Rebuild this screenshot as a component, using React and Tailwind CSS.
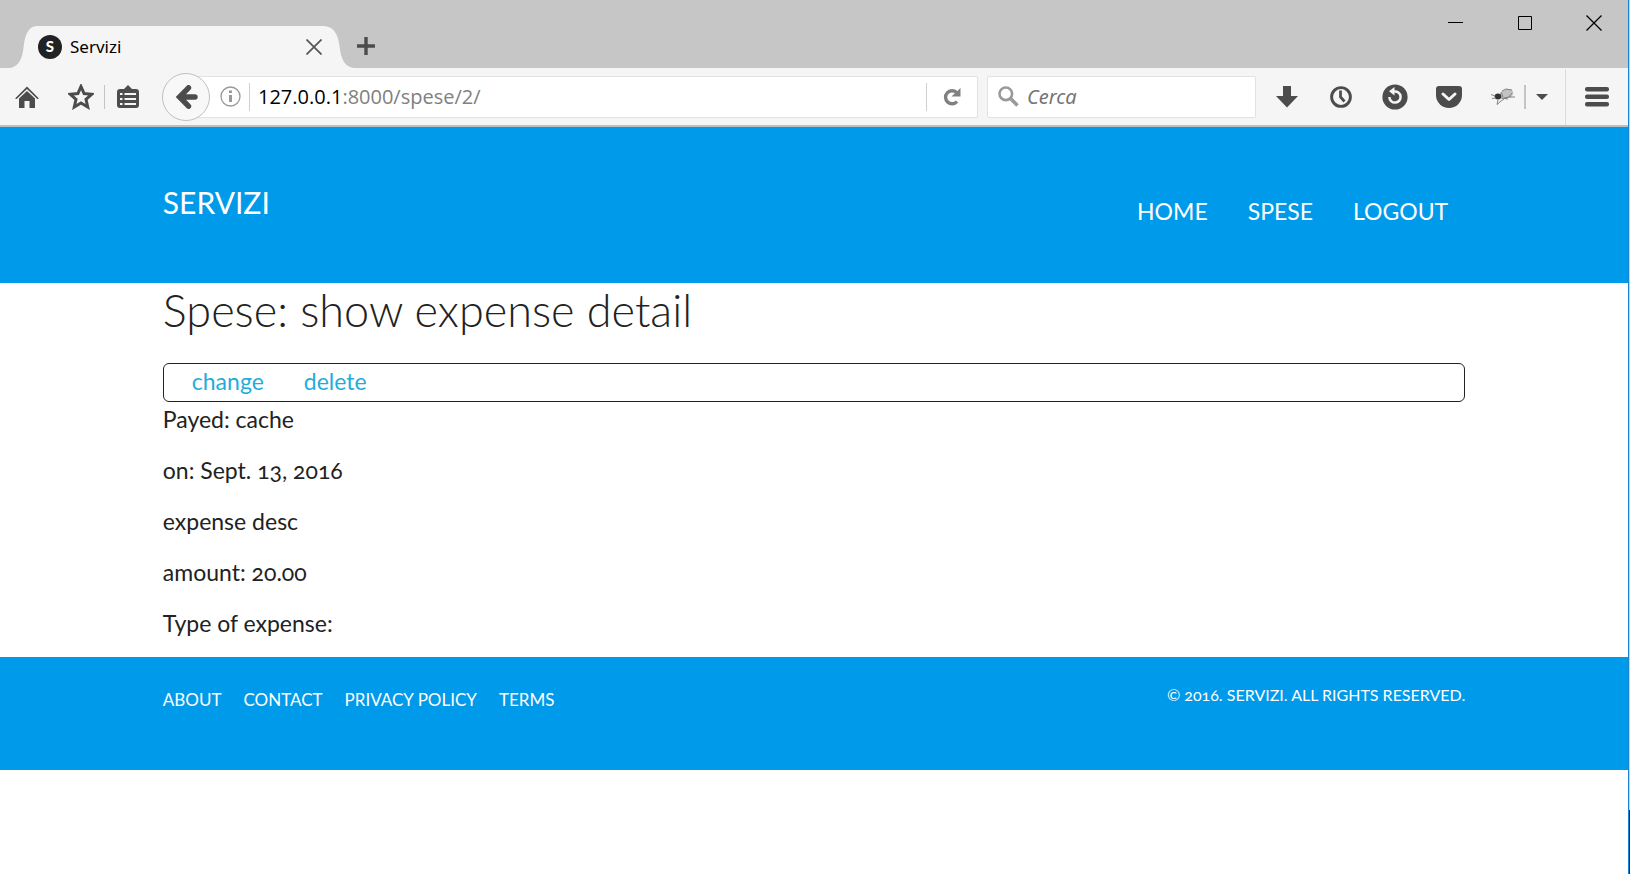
const DARK = '#4c4c4c';

function Icon({ w, h, box, children }) {
  return (
    <svg width={w} height={h} viewBox={box || `0 0 ${w} ${h}`} fill={DARK} aria-hidden="true" className="block shrink-0">
      {children}
    </svg>
  );
}

function ToolButton({ label, className = '', children }) {
  return (
    <button type="button" aria-label={label} className={`flex h-10 shrink-0 items-center justify-center ${className}`}>
      {children}
    </button>
  );
}

function TitleBar() {
  return (
    <div className="flex h-[68px] items-end justify-between bg-[#c6c6c6]">
      <div className="flex items-end">
        <svg width="30" height="42" viewBox="0 0 30 42" className="block ml-2 shrink-0" aria-hidden="true">
          <path d="M0 42C10 42 14 34 15.500 22C17 7 21 0 30 0V42Z" fill="#f5f5f5" />
        </svg>
        <div className="flex h-[42px] w-[286px] items-center bg-[#f5f5f5] pr-[2px]">
          <svg width="24" height="24" viewBox="0 0 24 24" className="block shrink-0" aria-hidden="true">
            <circle cx="12" cy="12" r="12" fill="#222" />
            <text x="12" y="17" textAnchor="middle" fontSize="15" fontWeight="900" fill="#fff" fontFamily="Lato, sans-serif">S</text>
          </svg>
          <span className="ml-2 flex-1 text-[17px] leading-6 text-black">Servizi</span>
          <button type="button" aria-label="Close tab">
            <svg width="16" height="16" viewBox="0 0 16 16" className="block" aria-hidden="true">
              <path d="M0.500 0.500L15.500 15.500M15.500 0.500L0.500 15.500" stroke="#555" strokeWidth="1.700" />
            </svg>
          </button>
        </div>
        <svg width="32" height="42" viewBox="0 0 32 42" className="block shrink-0" aria-hidden="true">
          <path d="M0 0C10 1 14 8 15.500 20C17 34 21 42 32 42H0Z" fill="#f5f5f5" />
        </svg>
        <button type="button" aria-label="New tab" className="mb-3">
          <svg width="20" height="20" viewBox="0 0 20 20" className="block" aria-hidden="true">
            <path d="M10 1V19M1 10H19" stroke="#4c4c4c" strokeWidth="3.400" />
          </svg>
        </button>
      </div>
      <div className="flex items-center gap-[53px] self-start pr-[26px] pt-[15px]">
        <button type="button" aria-label="Minimize">
          <svg width="16" height="16" className="block" aria-hidden="true"><path d="M0 7.500H15" stroke="#000" /></svg>
        </button>
        <button type="button" aria-label="Maximize">
          <svg width="16" height="16" className="block" aria-hidden="true"><path d="M1.500 1.500H14.500V14.500H1.500Z" fill="none" stroke="#000" /></svg>
        </button>
        <button type="button" aria-label="Close">
          <svg width="16" height="16" className="block" aria-hidden="true"><path d="M0.500 0.500L15.500 15.500M15.500 0.500L0.500 15.500" stroke="#000" strokeWidth="1.300" /></svg>
        </button>
      </div>
    </div>
  );
}

function Toolbar() {
  return (
    <div className="flex h-[59px] items-center border-b-2 border-[#bfbfbf] bg-[#f5f5f5]">
      <ToolButton label="Home" className="w-[54px]">
        <Icon w={24} h={24}>
          <path d="M12 1.500L24 13.500L22.300 14L12 4L1.700 14L0 13.500Z" />
          <path d="M12 6L20 13.500V23H14.500V16H9.500V23H4V13.500Z" />
        </Icon>
      </ToolButton>
      <ToolButton label="Bookmark" className="w-[50px] pl-[4px]">
        <Icon w={26} h={26}>
          <path d="M13 2.500L16.100 9.600L23.700 10.300L18 15.400L19.700 23L13 19L6.300 23L8 15.400L2.300 10.300L9.900 9.600Z" fill="none" stroke={DARK} strokeWidth="3" />
        </Icon>
      </ToolButton>
      <div className="h-6 w-px bg-[#c4c4c4]" />
      <ToolButton label="Bookmarks list" className="w-[46px]">
        <Icon w={22} h={24}>
          <path d="M3 4H7L11 0L15 4H19Q22 4 22 7V20Q22 23 19 23H3Q0 23 0 20V7Q0 4 3 4Z" />
          <path d="M3 8H5.500V10H3ZM3 13H5.500V15H3ZM3 18H5.500V20H3ZM7.500 8H19V10H7.500ZM7.500 13H19V15H7.500ZM7.500 18H19V20H7.500Z" fill="#f5f5f5" />
        </Icon>
      </ToolButton>
      <button type="button" aria-label="Back" className="z-10 ml-[11px] flex size-12 shrink-0 items-center justify-center rounded-full border border-[#c0c0c0] bg-[#f8f8f8]">
        <Icon w={24} h={24}>
          <path d="M14.500 2.800L5.500 12L14.500 21.200M6 12H21" fill="none" stroke={DARK} strokeWidth="5.400" strokeLinejoin="miter" strokeLinecap="round" />
        </Icon>
      </button>
      <div className="-ml-6 flex h-[42px] min-w-0 flex-1 items-center rounded-r-xs border border-[#e2e2e2] bg-white pl-[33px]">
        <ToolButton label="Site information" className="w-[21px]">
          <svg width="21" height="21" viewBox="0 0 21 21" className="block" aria-hidden="true">
            <circle cx="10.500" cy="10.500" r="9.500" fill="none" stroke="#999" strokeWidth="1.300" />
            <path d="M9 4.500H12V7H9ZM9 9H12V16H9Z" fill="#999" />
          </svg>
        </ToolButton>
        <div className="ml-2 h-7 w-px bg-[#d0d0d0]" />
        <div className="ml-2 min-w-0 flex-1 text-[20px] leading-7 text-[#808080] font-['Open_Sans',sans-serif]"><span className="text-black">127.0.0.1</span>:8000/spese/2/</div>
        <div className="h-7 w-px bg-[#d0d0d0]" />
        <ToolButton label="Reload" className="w-[50px]">
          <svg width="18" height="18" viewBox="0 0 18 18" className="block" aria-hidden="true">
            <path d="M13.500 4.500A6.500 6.500 0 1 0 14 13.500" fill="none" stroke="#808080" strokeWidth="3.400" />
            <path d="M17.500 0V8.500H8.500Z" fill="#808080" />
          </svg>
        </ToolButton>
      </div>
      <label className="ml-[9px] flex h-[42px] w-[269px] shrink-0 items-center rounded-xs border border-[#e2e2e2] bg-white pl-[10px]">
        <svg width="21" height="21" viewBox="0 0 21 21" className="block shrink-0" aria-hidden="true">
          <circle cx="7.800" cy="7.800" r="6.300" fill="none" stroke="#999" strokeWidth="2.600" />
          <path d="M12.500 12.500L19.500 19.500" stroke="#999" strokeWidth="3.600" />
        </svg>
        <input type="text" aria-label="Cerca" placeholder="Cerca" className="ml-2 min-w-0 flex-1 bg-transparent text-[20px] italic leading-7 text-black outline-none placeholder:text-[#757575]" />
      </label>
      <div className="flex shrink-0 items-center pl-1">
        <ToolButton label="Downloads" className="w-[54px]">
          <Icon w={22} h={22}><path d="M7 0H15V10H22L11 21.500L0 10H7Z" /></Icon>
        </ToolButton>
        <ToolButton label="History" className="w-[54px]">
          <Icon w={22} h={22}>
            <circle cx="11" cy="11" r="9.400" fill="none" stroke={DARK} strokeWidth="2.900" />
            <path d="M10.500 4.500V11L14.500 15.500" fill="none" stroke={DARK} strokeWidth="2.700" />
          </Icon>
        </ToolButton>
        <ToolButton label="Restart" className="w-[54px]">
          <Icon w={26} h={26}>
            <circle cx="13" cy="13" r="12.600" />
            <path d="M12 7.500A5.600 5.600 0 1 1 7.400 13" fill="none" stroke="#f5f5f5" strokeWidth="2.500" />
            <path d="M12.500 3V11.500L7 7.300Z" fill="#f5f5f5" />
          </Icon>
        </ToolButton>
        <ToolButton label="Pocket" className="w-[54px]">
          <Icon w={26} h={22}>
            <path d="M3 0H23Q26 0 26 3V9A13 13 0 0 1 0 9V3Q0 0 3 0Z" />
            <path d="M7 8L13 13.500L19 8" fill="none" stroke="#f5f5f5" strokeWidth="3" strokeLinecap="round" strokeLinejoin="round" />
          </Icon>
        </ToolButton>
        <ToolButton label="Firebug" className="w-[54px]">
          <Icon w={24} h={22}>
            <ellipse cx="15.500" cy="8" rx="7" ry="4.800" transform="rotate(-18 15.500 8)" fill="#c2c2c2" />
            <path d="M11 5L15 3L21 4M13 12L18 11L21 7M10 6L12 11" fill="none" stroke="#808080" />
            <ellipse cx="7" cy="10.500" rx="3.300" ry="3" fill="#333" />
            <path d="M4 10L0 8.500M5 12L1 12.500M7 14L6 18.500L10 15L13 13M10 12L17 13M18 11L24 11" fill="none" stroke="#777" strokeWidth="0.900" />
          </Icon>
        </ToolButton>
        <div className="-ml-[6px] h-6 w-[2px] bg-[#c4c4c4]" />
        <ToolButton label="Firebug menu" className="w-[31px]">
          <Icon w={12} h={6}><path d="M0 0H12L6 6Z" /></Icon>
        </ToolButton>
        <div className="ml-2 h-14 w-px bg-[#dcdcdc]" />
        <ToolButton label="Menu" className="w-[62px]">
          <Icon w={24} h={20}>
            <rect width="24" height="4.500" rx="2" /><rect y="7.500" width="24" height="4.500" rx="2" /><rect y="15" width="24" height="4.500" rx="2" />
          </Icon>
        </ToolButton>
      </div>
    </div>
  );
}

const details = ['Payed: cache', 'on: Sept. 13, 2016', 'expense desc', 'amount: 20.00', 'Type of expense:'];

export default function App() {
  return (
    <div className="flex min-h-screen">
      <div className="min-w-0 flex-1 border-r border-[#1883d7] bg-white">
        <div className="font-['Noto_Sans',sans-serif]">
          <TitleBar />
          <Toolbar />
        </div>
        <div className="font-[Lato,sans-serif] text-[23px] leading-[34px] text-[#222] oldstyle-nums">
          <header className="h-[156px] bg-[#009aea] text-white">
            <div className="mx-auto flex w-4/5 items-start justify-between">
              <a href="#home" className="pt-[58px] text-[30px]">SERVIZI</a>
              <nav className="flex gap-10 pr-[17px] pt-[67px]">
                <a href="#home">HOME</a>
                <a href="#spese">SPESE</a>
                <a href="#logout">LOGOUT</a>
              </nav>
            </div>
          </header>
          <main className="mx-auto w-4/5">
            <h1 className="text-[45px] font-light leading-[54px]">Spese: show expense detail</h1>
            <nav className="mt-[26px] flex h-[39px] items-start gap-10 rounded-md border border-[#222] px-7 text-[#1eaedb]">
              <a href="#change">change</a>
              <a href="#delete">delete</a>
            </nav>
            <div className="flex flex-col gap-[17px] pb-[17px]">
              {details.map((line) => <p key={line}>{line}</p>)}
            </div>
          </main>
          <footer className="h-[113px] bg-[#009aea] text-[17px] leading-6 text-white">
            <div className="mx-auto flex w-4/5 items-start justify-between">
              <nav className="flex gap-[22px] pt-[31px]">
                <a href="#about">ABOUT</a>
                <a href="#contact">CONTACT</a>
                <a href="#privacy">PRIVACY POLICY</a>
                <a href="#terms">TERMS</a>
              </nav>
              <p className="pt-[26px] text-base">© 2016. SERVIZI. ALL RIGHTS RESERVED.</p>
            </div>
          </footer>
        </div>
      </div>
      <div className="flex w-px flex-col bg-[#c8d4e0]">
        <div className="mt-auto h-16 bg-[#26303c]" />
      </div>
    </div>
  );
}
